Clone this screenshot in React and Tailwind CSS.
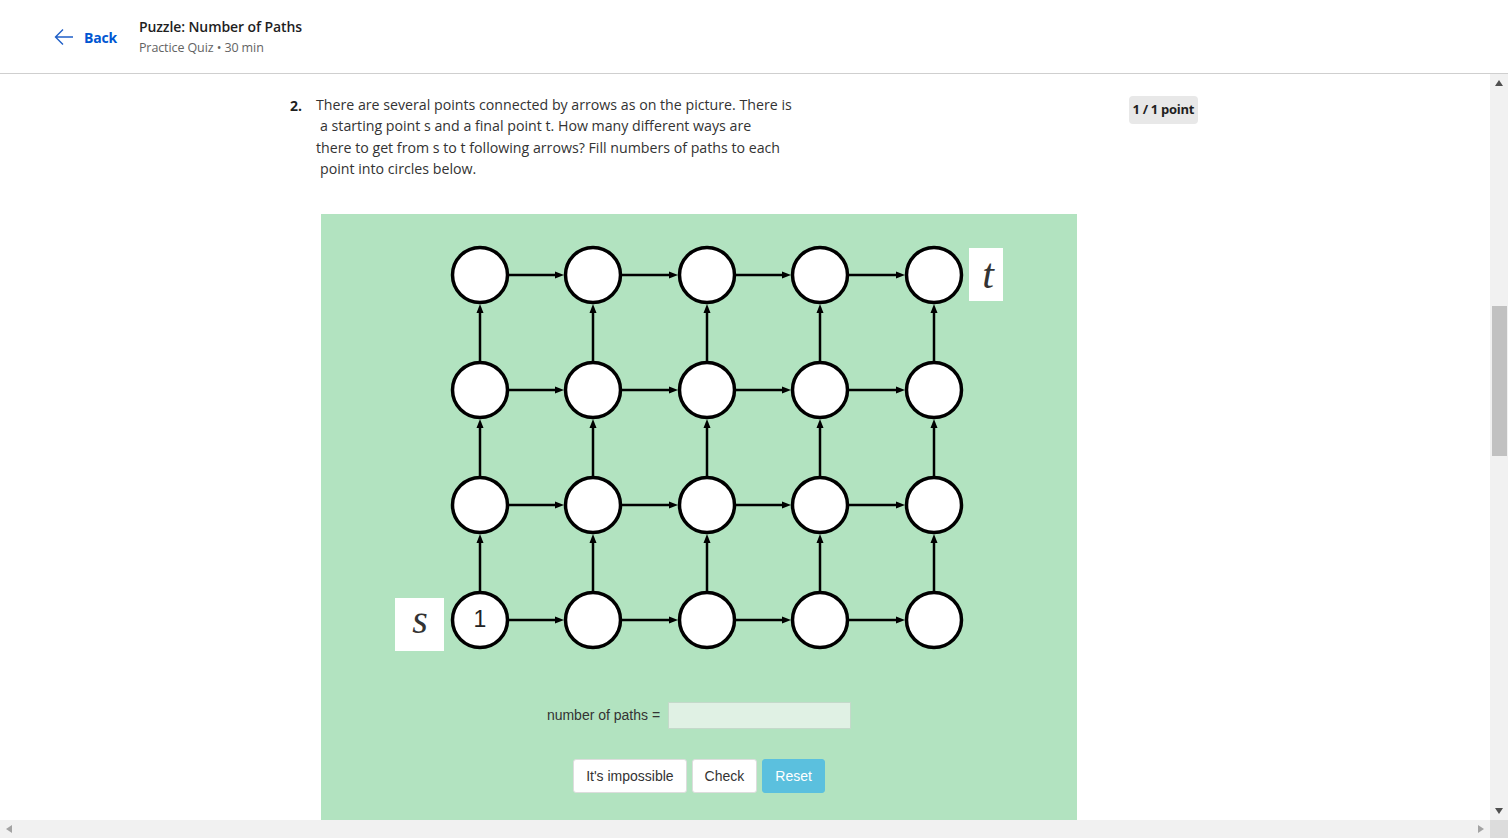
import React from "react";

const XS = [159, 272, 386, 499, 613];
const YS = [61, 176, 291, 406];
const R = 27.5;

function Graph() {
  const els = [];
  YS.forEach((y, ri) => {
    for (let i = 0; i < XS.length - 1; i++) {
      const x1 = XS[i] + R + 1.5;
      const x2 = XS[i + 1] - R - 1.5;
      els.push(
        <g key={`h${ri}-${i}`}>
          <line x1={x1} y1={y} x2={x2 - 7} y2={y} stroke="#000" strokeWidth="2.5" />
          <polygon points={`${x2},${y} ${x2 - 9},${y - 3.5} ${x2 - 9},${y + 3.5}`} fill="#000" />
        </g>
      );
    }
  });
  XS.forEach((x, ci) => {
    for (let j = 1; j < YS.length; j++) {
      const y1 = YS[j] - R - 1.5;
      const y2 = YS[j - 1] + R + 1.5;
      els.push(
        <g key={`v${ci}-${j}`}>
          <line x1={x} y1={y1} x2={x} y2={y2 + 7} stroke="#000" strokeWidth="2.5" />
          <polygon points={`${x},${y2} ${x - 3.5},${y2 + 9} ${x + 3.5},${y2 + 9}`} fill="#000" />
        </g>
      );
    }
  });
  YS.forEach((y, ri) =>
    XS.forEach((x, ci) =>
      els.push(
        <circle key={`c${ri}-${ci}`} cx={x} cy={y} r={R} fill="#fff" stroke="#000" strokeWidth="3.5" />
      )
    )
  );
  return (
    <svg width="756" height="470" viewBox="0 0 756 470" className="block">
      {els}
      <text x={159} y={413} textAnchor="middle" style={{ fontFamily: '"Liberation Sans", Arial, sans-serif' }} fontSize="23" fill="#222">
        1
      </text>
      <rect x="648" y="34" width="34" height="53" fill="#fff" />
      <text x="667" y="74" textAnchor="middle" style={{ fontFamily: '"Liberation Serif", serif' }} fontStyle="italic" fontSize="42" fill="#333">
        t
      </text>
      <rect x="74" y="384" width="49" height="53" fill="#fff" />
      <text x="99" y="419" textAnchor="middle" style={{ fontFamily: '"Liberation Serif", serif' }} fontStyle="italic" fontSize="40" fill="#333">
        s
      </text>
    </svg>
  );
}

function Tri({ dir, color }) {
  const pts = {
    up: "0,6 4,0 8,6",
    down: "0,0 8,0 4,6",
    left: "6,0 6,8 0,4",
    right: "0,0 0,8 6,4",
  }[dir];
  const w = dir === "up" || dir === "down" ? 8 : 6;
  const h = dir === "up" || dir === "down" ? 6 : 8;
  return (
    <svg width={w} height={h} viewBox={`0 0 ${w} ${h}`}>
      <polygon points={pts} fill={color} />
    </svg>
  );
}

export default function App() {
  return (
    <div className="w-[1508px] h-[838px] overflow-hidden flex flex-col bg-white" style={{ fontFamily: '"Open Sans", sans-serif' }}>
      <header className="h-[74px] shrink-0 border-b border-[#cfcfcf] flex items-center">
        <div className="flex items-center pl-[54px] gap-[10px] text-[#0056d2]">
          <svg width="20" height="18" viewBox="0 0 20 18" fill="none" stroke="#1f5fc7" strokeWidth="1.4">
            <path d="M19 9H2M9 1.5L1.5 9L9 16.5" />
          </svg>
          <span className="text-[14px] font-bold tracking-[-0.2px] mt-[1px]">Back</span>
        </div>
        <div className="ml-[22px] flex flex-col mt-[1px]">
          <span className="text-[14px] font-semibold text-[#1f1f1f] leading-[20px] tracking-[-0.1px]">Puzzle: Number of Paths</span>
          <span className="text-[12.5px] text-[#636363] leading-[20px] mt-[1px] tracking-[-0.1px]">Practice Quiz • 30 min</span>
        </div>
      </header>

      <div className="flex-1 flex min-h-0">
        <main className="flex-1 min-w-0 overflow-hidden">
          <div className="w-[910px] mx-auto pt-[20px]">
            <div className="flex justify-between items-start">
              <div className="flex text-[14.2px] text-[#333] leading-[21.3px]">
                <span className="w-[26px] font-bold text-[#1f1f1f] mt-[1px] text-[14px]">2.</span>
                <div>
                  <div>There are several points connected by arrows as on the picture. There is</div>
                  <div className="pl-[4px]">a starting point s and a final point t. How many different ways are</div>
                  <div>there to get from s to t following arrows? Fill numbers of paths to each</div>
                  <div className="pl-[4px]">point into circles below.</div>
                </div>
              </div>
              <div className="mt-[2px] mr-[2px] bg-[#e8e8e8] rounded-[4px] px-[4px] h-[28px] flex items-center text-[13px] font-bold text-[#1f1f1f] tracking-[-0.3px]">
                1 / 1 point
              </div>
            </div>

            <div className="ml-[31px] mt-[35px] w-[756px] h-[620px] bg-[#b2e3c0] flex flex-col items-center" style={{ fontFamily: '"Liberation Sans", Arial, sans-serif' }}>
              <Graph />
              <div className="mt-[18px] flex items-center gap-[8px] text-[14px] text-[#333]">
                <span>number of paths =</span>
                <div className="w-[183px] h-[27px] bg-[#e0f1e4] border border-[#c4d9ca]" />
              </div>
              <div className="mt-[30px] flex gap-[5px] text-[14px]">
                <button className="h-[34px] px-[12px] bg-white text-[#333] rounded-[3px] border border-[#ddd]">It's impossible</button>
                <button className="h-[34px] px-[12px] bg-white text-[#333] rounded-[3px] border border-[#ddd]">Check</button>
                <button className="h-[34px] px-[12px] bg-[#5bc0de] text-white rounded-[3px] border border-[#5bc0de]">Reset</button>
              </div>
            </div>
          </div>
        </main>
        <div className="w-[18px] shrink-0 bg-[#f1f1f1] flex flex-col items-center">
          <div className="h-[18px] flex items-center justify-center"><Tri dir="up" color="#505050" /></div>
          <div className="flex-1 w-full">
            <div className="mt-[214px] mx-auto w-[15px] h-[150px] bg-[#c1c1c1]" />
          </div>
          <div className="h-[18px] flex items-center justify-center"><Tri dir="down" color="#505050" /></div>
        </div>
      </div>
      <div className="h-[18px] shrink-0 bg-[#f1f1f1] flex">
        <div className="flex-1 flex items-center justify-between px-[6px]">
          <Tri dir="left" color="#a3a3a3" />
          <Tri dir="right" color="#a3a3a3" />
        </div>
        <div className="w-[18px] bg-[#dcdcdc]" />
      </div>
    </div>
  );
}
